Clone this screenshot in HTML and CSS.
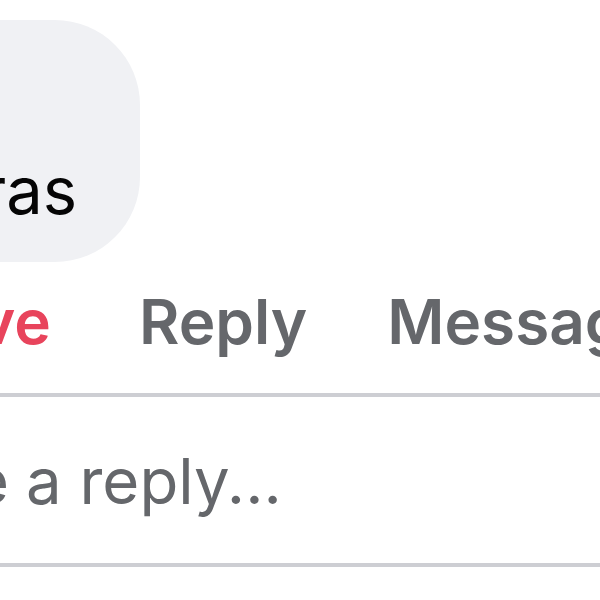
FILE: index.html
```html
<!DOCTYPE html>
<html lang="en">
<head>
<meta charset="utf-8">
<title>Comment</title>
<link rel="stylesheet" href="styles.css">
</head>
<body>
<div class="comment">
  <div class="bubble-row">
    <div class="bubble">
      <div class="name">Daniel</div>
      <div class="text">Love these cameras</div>
    </div>
  </div>
  <div class="actions">
    <div class="lead"><span class="action love">Love</span></div>
    <span class="action">Reply</span>
    <span class="action">Message</span>
  </div>
  <div class="reply-box">
    <div class="lead lead-reply"><span>Write</span></div>
    <span class="placeholder">a reply...</span>
  </div>
</div>
</body>
</html>
```
FILE: styles.css
```css
html, body {
  margin: 0;
  padding: 0;
  background: #ffffff;
}
body {
  width: 600px;
  height: 600px;
  overflow: hidden;
  font-family: Inter, "Noto Sans", "Liberation Sans", sans-serif;
}
.comment {
  padding-top: 20px;
}
.bubble-row {
  width: 140px;
  display: flex;
  justify-content: flex-end;
}
.bubble {
  flex: none;
  background: #f0f1f4;
  border-radius: 85px;
  padding: 25px 63px 23px 60px;
  white-space: nowrap;
}
.name {
  font-size: 62px;
  font-weight: 600;
  line-height: 98px;
  color: #050505;
}
.text {
  font-size: 65px;
  line-height: 96px;
  color: #050505;
}
.actions {
  display: flex;
  align-items: baseline;
  margin-top: 20px;
  white-space: nowrap;
}
.lead {
  flex: none;
  width: 51px;
  display: flex;
  justify-content: flex-end;
}
.action {
  font-size: 62px;
  font-weight: 600;
  line-height: 80px;
  color: #65676b;
  margin-left: 88px;
}
.action + .action {
  margin-left: 80px;
}
.lead .action {
  margin-left: 0;
}
.love {
  color: #e8445c;
}
.reply-box {
  margin-top: 31px;
  border-top: 4px solid #cdced3;
  border-bottom: 4px solid #cdced3;
  padding: 34px 0 32px;
  display: flex;
  white-space: nowrap;
  font-size: 63.5px;
  line-height: 100px;
  color: #65676b;
}
.lead-reply {
  width: 9px;
}
.placeholder {
  margin-left: 17px;
}
```
